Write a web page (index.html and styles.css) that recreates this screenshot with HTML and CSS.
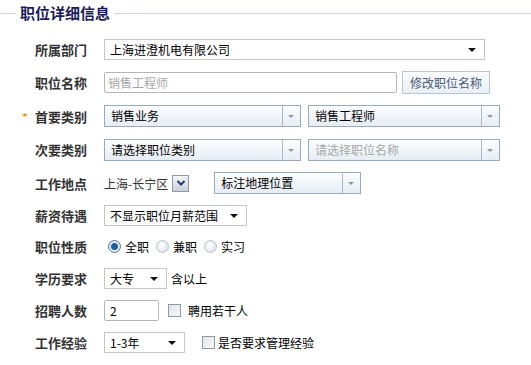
FILE: index.html
```html
<!DOCTYPE html>
<html lang="zh-CN">
<head>
    <meta charset="UTF-8">
    <title>职位详细信息</title>
    <link rel="stylesheet" href="styles.css">
</head>
<body>
    <div class="section-title"><span>职位详细信息</span></div>

    <div class="form">
        <div class="row">
            <label class="label">所属部门</label>
            <div class="select select-dept">上海进澄机电有限公司<span class="caret"></span></div>
        </div>

        <div class="row row-tall">
            <label class="label">职位名称</label>
            <div class="input input-name placeholder">销售工程师</div>
            <button class="btn">修改职位名称</button>
        </div>

        <div class="row">
            <label class="label"><span class="req">*</span>首要类别</label>
            <div class="combo combo-cat">销售业务<span class="combo-arrow"></span></div>
            <div class="combo combo-job">销售工程师<span class="combo-arrow"></span></div>
        </div>

        <div class="row row-tall">
            <label class="label">次要类别</label>
            <div class="combo combo-cat">请选择职位类别<span class="combo-arrow"></span></div>
            <div class="combo combo-job placeholder">请选择职位名称<span class="combo-arrow"></span></div>
        </div>

        <div class="row">
            <label class="label">工作地点</label>
            <span class="city">上海-长宁区</span>
            <span class="city-btn">
                <svg width="10" height="8" viewBox="0 0 10 8"><path d="M1.5 2 L5 5.5 L8.5 2" fill="none" stroke="#1f3d7a" stroke-width="2"/></svg>
            </span>
            <div class="combo combo-geo">标注地理位置<span class="combo-arrow"></span></div>
        </div>

        <div class="row">
            <label class="label">薪资待遇</label>
            <div class="select select-salary">不显示职位月薪范围<span class="caret"></span></div>
        </div>

        <div class="row row-short">
            <label class="label">职位性质</label>
            <span class="radio checked"></span><span class="opt">全职</span>
            <span class="radio"></span><span class="opt">兼职</span>
            <span class="radio"></span><span class="opt">实习</span>
        </div>

        <div class="row">
            <label class="label">学历要求</label>
            <div class="select select-edu">大专<span class="caret"></span></div>
            <span class="note">含以上</span>
        </div>

        <div class="row">
            <label class="label">招聘人数</label>
            <div class="input input-count">2</div>
            <span class="check check-count"></span><span class="note note-wide">聘用若干人</span>
        </div>

        <div class="row">
            <label class="label">工作经验</label>
            <div class="select select-exp">1-3年<span class="caret"></span></div>
            <span class="check check-exp"></span><span class="note note-tight">是否要求管理经验</span>
        </div>
    </div>
</body>
</html>
```

FILE: styles.css
```css
body {
    margin: 0;
    font-family: "Noto Sans CJK SC", "DejaVu Sans", sans-serif;
    font-size: 12px;
    color: #000;
    background: #fff;
}

.section-title {
    display: flex;
    align-items: center;
    height: 26px;
}

.section-title::before {
    content: "";
    width: 16px;
    border-top: 1px solid #c9d5e2;
}

.section-title::after {
    content: "";
    flex: 1;
    border-top: 1px solid #c9d5e2;
}

.section-title span {
    padding: 0 4px;
    font-size: 15px;
    font-weight: bold;
    color: #1c1c5c;
    line-height: 20px;
}

.form {
    padding-top: 7px;
}

.row {
    display: flex;
    align-items: center;
    height: 32px;
}

.row-tall {
    height: 35px;
}

.row-short {
    height: 31px;
}

.label {
    position: relative;
    width: 69px;
    padding-left: 35px;
    font-size: 13px;
    font-weight: bold;
    color: #333;
    flex-shrink: 0;
}

.req {
    position: absolute;
    left: 22px;
    top: 1px;
    color: #f08a00;
    font-weight: normal;
}

/* native-looking select */
.select {
    position: relative;
    box-sizing: border-box;
    height: 21px;
    line-height: 19px;
    padding-left: 5px;
    border: 1px solid #c6c6c6;
    background: #fff;
}

.caret {
    position: absolute;
    right: 8px;
    top: 8px;
    border-left: 4px solid transparent;
    border-right: 4px solid transparent;
    border-top: 4px solid #111;
}

.select-dept { width: 381px; }
.select-salary { width: 143px; }
.select-edu { width: 63px; }
.select-exp { width: 81px; }

.input {
    box-sizing: border-box;
    height: 21px;
    line-height: 19px;
    padding-left: 3px;
    border: 1px solid #b5b5b5;
    border-radius: 2px;
    background: #fff;
}

.input-name { width: 293px; }
.input-count { width: 55px; padding-left: 5px; }

.placeholder {
    color: #a8a8a8;
}

.btn {
    margin-left: 5px;
    height: 23px;
    width: 88px;
    padding: 0;
    border: 1px solid #b8c6d4;
    background: linear-gradient(#fbfcfd, #e9eff5);
    color: #4a5a78;
    font-family: inherit;
    font-size: 12px;
}

/* combo with separated arrow */
.combo {
    position: relative;
    box-sizing: border-box;
    height: 22px;
    line-height: 20px;
    padding-left: 6px;
    border: 1px solid #98abbd;
    background: linear-gradient(#fdfeff, #e6edf4);
}

.combo-arrow {
    position: absolute;
    right: 0;
    top: 0;
    bottom: 0;
    width: 17px;
    border-left: 1px solid #a9b9c9;
}

.combo-arrow::after {
    content: "";
    position: absolute;
    left: 5px;
    top: 9px;
    border-left: 3px solid transparent;
    border-right: 3px solid transparent;
    border-top: 3px solid #8a98a8;
}

.combo-cat { width: 197px; }
.combo-job { width: 192px; margin-left: 7px; }
.combo-geo { width: 147px; margin-left: 25px; }

.city {
    color: #333;
}

.city-btn {
    display: flex;
    align-items: center;
    justify-content: center;
    box-sizing: border-box;
    width: 17px;
    height: 17px;
    margin-left: 4px;
    border: 1px solid #8d9aa8;
    background: linear-gradient(#f4f6f8, #c9d0d8);
}

.radio {
    box-sizing: border-box;
    width: 13px;
    height: 13px;
    margin-left: 4px;
    border-radius: 50%;
    border: 1px solid #b9c0c8;
    background: radial-gradient(circle at 40% 40%, #fff, #d6dbe0);
}

.radio.checked {
    border-color: #5a7590;
    background: radial-gradient(circle, #1f5f9e 0 3px, #e3ebf2 4px);
}

.opt {
    margin-left: 4px;
    margin-right: 3px;
}

.note {
    margin-left: 4px;
}

.note-wide {
    margin-left: 7px;
}

.note-tight {
    margin-left: 3px;
}

.check {
    box-sizing: border-box;
    width: 13px;
    height: 13px;
    border: 1px solid #8f9aa6;
    background: linear-gradient(135deg, #e2e6ea, #f6f7f8);
}

.check-count {
    margin-left: 9px;
}

.check-exp {
    margin-left: 17px;
}
```
